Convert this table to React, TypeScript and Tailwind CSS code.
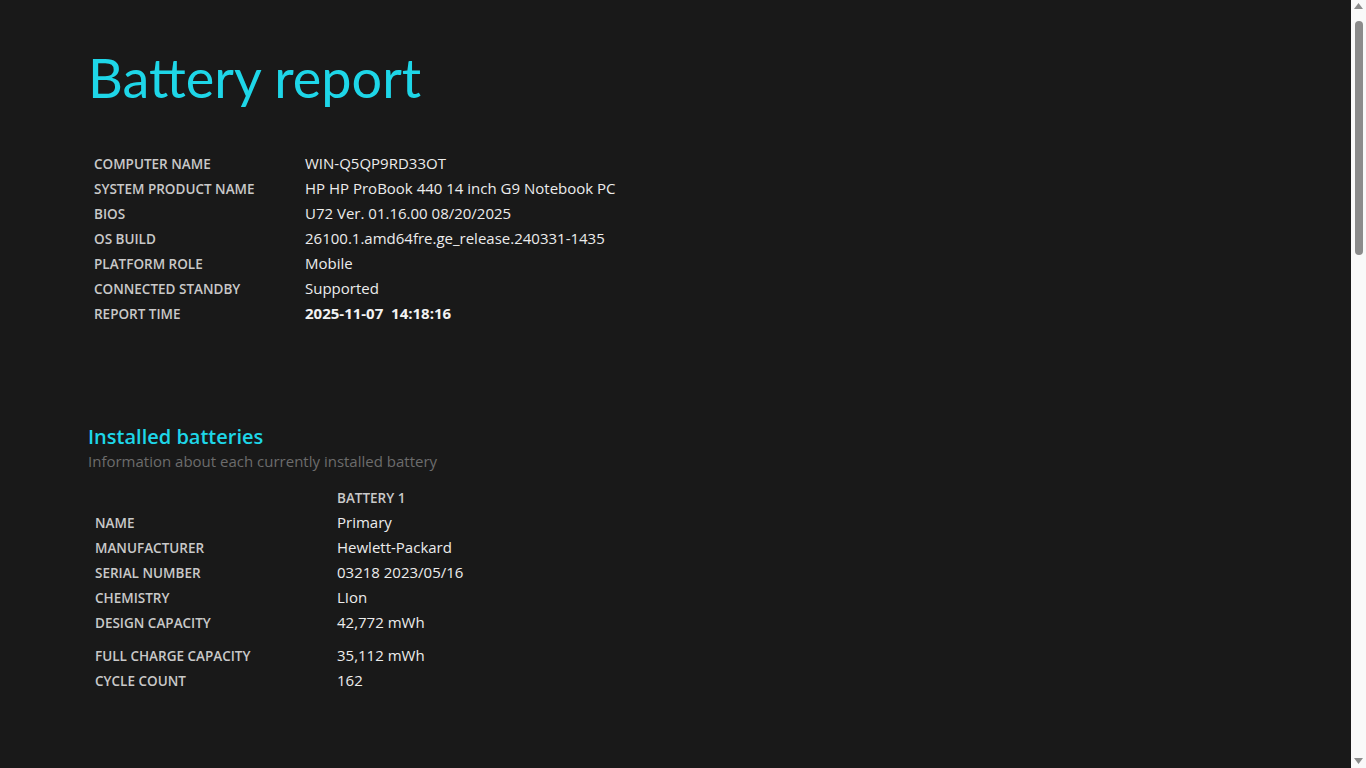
import React from "react";

const SYSTEM_INFO = [
  { label: "COMPUTER NAME", value: "WIN-Q5QP9RD33OT" },
  { label: "SYSTEM PRODUCT NAME", value: "HP HP ProBook 440 14 inch G9 Notebook PC" },
  { label: "BIOS", value: "U72 Ver. 01.16.00 08/20/2025" },
  { label: "OS BUILD", value: "26100.1.amd64fre.ge_release.240331-1435" },
  { label: "PLATFORM ROLE", value: "Mobile" },
  { label: "CONNECTED STANDBY", value: "Supported" },
];

const BATTERY_ROWS = [
  { label: "NAME", value: "Primary" },
  { label: "MANUFACTURER", value: "Hewlett-Packard" },
  { label: "SERIAL NUMBER", value: "03218 2023/05/16" },
  { label: "CHEMISTRY", value: "LIon" },
  { label: "DESIGN CAPACITY", value: "42,772 mWh" },
];

const BATTERY_ROWS_2 = [
  { label: "FULL CHARGE CAPACITY", value: "35,112 mWh" },
  { label: "CYCLE COUNT", value: "162" },
];

function Row({ label, value, labelW }: { label: string; value: string; labelW: string }) {
  return (
    <div className="flex h-[25px] items-center">
      <div className={`${labelW} pt-[1px] text-[13.5px] font-semibold text-[#c9c9c9]`}>{label}</div>
      <div className="text-[15px] text-[#ececec]">{value}</div>
    </div>
  );
}

// fake window scrollbar, as seen in the screenshot
function Scrollbar() {
  return (
    <div className="flex w-[15px] shrink-0 flex-col items-center bg-[#f9f9f9]">
      <svg width="9" height="6" viewBox="0 0 9 6" className="mt-[3px]">
        <path d="M4.5 0 L9 6 L0 6 Z" fill="#8c8c8c" />
      </svg>
      <div className="mt-[12px] h-[234px] w-[8px] rounded-full bg-[#8b8b8b]" />
      <div className="flex-1" />
      <svg width="9" height="6" viewBox="0 0 9 6" className="mb-[4px]">
        <path d="M0 0 L9 0 L4.5 6 Z" fill="#8c8c8c" />
      </svg>
    </div>
  );
}

export default function App() {
  return (
    <div className="flex h-screen overflow-hidden bg-[#191919] text-white">
      <div
        className="flex-1 overflow-hidden"
        style={{ fontFamily: '"Open Sans", "Noto Sans", sans-serif' }}
      >
        <div className="pl-[88px] pt-[38px]">
          <h1
            className="text-[54px] leading-[80px] text-[#1ed6e8]"
            style={{ fontFamily: 'Lato, "Open Sans", sans-serif' }}
          >
            Battery report
          </h1>

          <div className="mt-[33px] pl-[6px]">
            {SYSTEM_INFO.map((r) => (
              <Row key={r.label} label={r.label} value={r.value} labelW="w-[211px]" />
            ))}
            <div className="flex h-[25px] items-center">
              <div className="w-[211px] pt-[1px] text-[13.5px] font-semibold text-[#c9c9c9]">REPORT TIME</div>
              <div className="text-[15px] font-bold text-[#f2f2f2]">2025-11-07&nbsp;&nbsp;14:18:16</div>
            </div>
          </div>

          <h2 className="mt-[97px] text-[20px] font-semibold leading-[28px] text-[#1ed6e8]">Installed batteries</h2>
          <div className="text-[15px] leading-[20px] text-[#6c6c6c]">
            Information about each currently installed battery
          </div>

          <div className="mt-[14px] pl-[7px]">
            <div className="flex h-[25px] items-center">
              <div className="w-[242px]" />
              <div className="pt-[1px] text-[13.5px] font-semibold text-[#c9c9c9]">BATTERY 1</div>
            </div>
            {BATTERY_ROWS.map((r) => (
              <Row key={r.label} label={r.label} value={r.value} labelW="w-[242px]" />
            ))}
            <div className="h-[8px]" />
            {BATTERY_ROWS_2.map((r) => (
              <Row key={r.label} label={r.label} value={r.value} labelW="w-[242px]" />
            ))}
          </div>
        </div>
      </div>
      <Scrollbar />
    </div>
  );
}
